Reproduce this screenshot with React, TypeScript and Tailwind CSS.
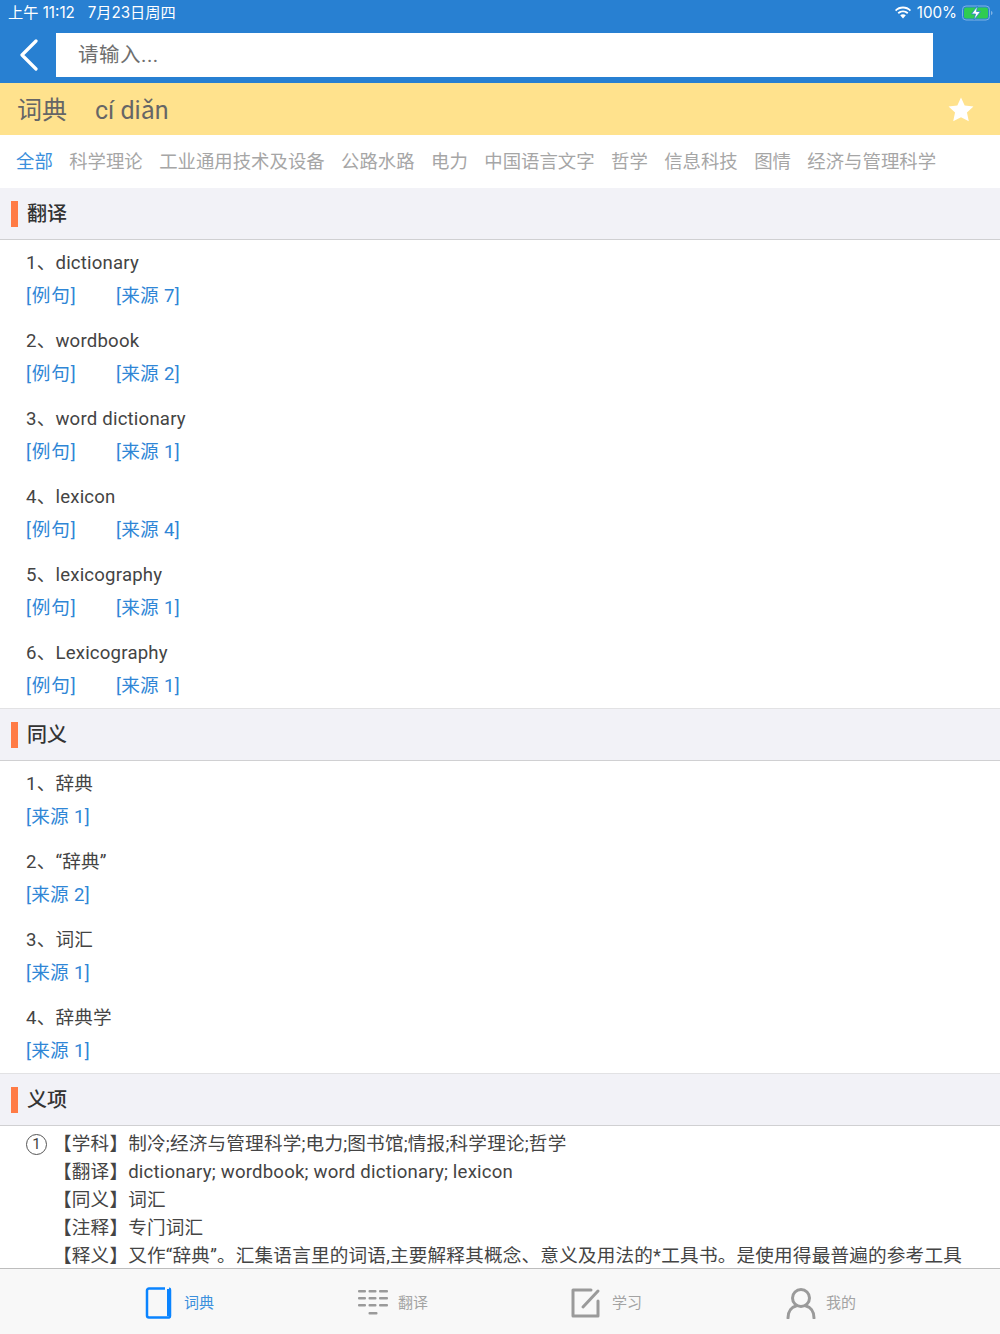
const font = { fontFamily: '"Roboto", "Noto Sans CJK SC", sans-serif' };

const subjects = ["科学理论", "工业通用技术及设备", "公路水路", "电力", "中国语言文字", "哲学", "信息科技", "图情", "经济与管理科学"];

const translations = [
  { text: "1、dictionary", source: 7 },
  { text: "2、wordbook", source: 2 },
  { text: "3、word dictionary", source: 1 },
  { text: "4、lexicon", source: 4 },
  { text: "5、lexicography", source: 1 },
  { text: "6、Lexicography", source: 1 },
];

const synonyms = [
  { text: "1、辞典", source: 1 },
  { text: "2、“辞典”", source: 2 },
  { text: "3、词汇", source: 1 },
  { text: "4、辞典学", source: 1 },
];

const meanings = [
  ["【学科】", "制冷;经济与管理科学;电力;图书馆;情报;科学理论;哲学"],
  ["【翻译】", "dictionary; wordbook; word dictionary; lexicon"],
  ["【同义】", "词汇"],
  ["【注释】", "专门词汇"],
  ["【释义】", "又作“辞典”。汇集语言里的词语,主要解释其概念、意义及用法的*工具书。是使用得最普遍的参考工具"],
];

function SectionHeader({ title, first }: { title: string; first?: boolean }) {
  return (
    <div
      className={
        first
          ? "flex h-[52px] items-center border-b border-b-[#d0d0d2] bg-[#f2f2f7] pl-[11px]"
          : "flex h-[53px] items-center border-y border-t-[#e2e2e4] border-b-[#d0d0d2] bg-[#f2f2f7] pl-[11px]"
      }
    >
      <div className="h-[26px] w-[7px] bg-[#ff7b45]" />
      <span className="ml-[9px] text-[20px] font-medium text-[#333]">{title}</span>
    </div>
  );
}

function Row({ text, source, example }: { text: string; source: number; example?: boolean }) {
  return (
    <div className="h-[78px] pl-[26px] pt-[7px] text-[18.6px] leading-[33px]">
      <div className="tracking-[0.2px] text-[#444]">{text}</div>
      <div className="flex text-[#2f86d6]">
        {example && <span className="w-[90px] tracking-[0.9px]">[例句]</span>}
        <span className="tracking-[0.3px]">[来源 {source}]</span>
      </div>
    </div>
  );
}

function TabItem({ icon, label, active }: { icon: React.ReactNode; label: string; active?: boolean }) {
  return (
    <div className="flex w-[214px] items-center">
      <div className="flex w-[51px] justify-center">{icon}</div>
      <span className={active ? "text-[15px] text-[#3b8fdc]" : "text-[15px] text-[#a3a3a3]"}>{label}</span>
    </div>
  );
}

export default function App() {
  return (
    <div className="flex h-[1334px] w-[1000px] flex-col overflow-hidden bg-white" style={font}>
      <div className="bg-[#2880d2]">
        <div className="flex h-[33px] items-center justify-between pl-[8px] pr-[6px] font-['Inter','Noto_Sans_CJK_SC',sans-serif] text-[15.2px] text-white">
          <span className="mt-[-7px]">上午 11:12&nbsp;&nbsp;&nbsp;7月23日周四</span>
          <div className="mt-[-7px] flex items-center gap-[5px]">
            <svg width="18" height="14" viewBox="0 0 18 14" fill="white">
              <path d="M9 2.500c2.600 0 5 1 6.800 2.700l1.200-1.300C14.900 1.800 12.100.6 9 .6S3.100 1.800 1 3.900l1.200 1.300C4 3.500 6.400 2.500 9 2.500z" />
              <path d="M9 6.300c1.600 0 3 .6 4.100 1.600l1.300-1.300C13 5.200 11.100 4.400 9 4.400s-4 .8-5.400 2.200l1.300 1.300C6 6.900 7.400 6.300 9 6.300z" />
              <path d="M9 8.200c-1.100 0-2 .4-2.800 1.100L9 12.400l2.800-3.100C11 8.600 10.100 8.200 9 8.200z" />
            </svg>
            <span>100%</span>
            <svg width="32" height="16" viewBox="0 0 32 16">
              <rect x="0.500" y="1" width="27" height="14" rx="3.500" fill="none" stroke="#7fb2e4" />
              <rect x="2" y="2.500" width="24" height="11" rx="2" fill="#2fcc52" />
              <path d="M29 6v4c1-.3 1.500-1 1.500-2s-.5-1.700-1.500-2z" fill="#7fb2e4" />
              <path d="M15.500 1 9.500 9h4l-1.500 6 6.500-8.500h-4z" fill="white" stroke="#2880d2" strokeWidth="0.800" />
            </svg>
          </div>
        </div>
        <div className="flex h-[50px] items-start">
          <div className="flex h-[44px] w-[56px] items-center justify-center pl-[1px]">
            <svg width="22" height="32" viewBox="0 0 22 32" fill="none" stroke="white" strokeWidth="3.200" strokeLinecap="round" strokeLinejoin="round">
              <path d="M18 2 4 16l14 14" />
            </svg>
          </div>
          <div className="flex h-[44px] w-[877px] items-center bg-white pl-[22px] text-[20.5px] tracking-[0.5px] text-[#6f6f6f]">请输入...</div>
        </div>
      </div>

      <div className="flex h-[52px] items-center justify-between bg-[#ffe28d] pl-[17px] pr-[26px] text-[#666]">
        <div className="flex items-center pt-[3px]">
          <span className="w-[78px] text-[25px]">词典</span>
          <span className="text-[25px]">cí diǎn</span>
        </div>
        <svg width="26" height="25" viewBox="0 0 24 23" fill="white">
          <path d="M12 .5l3.400 7.400 8.100.9-6 5.500 1.700 8L12 18.600l-7.200 3.700 1.700-8-6-5.500 8.100-.9z" />
        </svg>
      </div>

      <div className="flex h-[53px] items-center gap-[16.4px] bg-white pl-[16px] pt-[1px] text-[18.4px] text-[#a6a6a6]">
        <span className="text-[#3b8fdc]">全部</span>
        {subjects.map((s) => (
          <span key={s}>{s}</span>
        ))}
      </div>

      <div className="min-h-0 flex-1 overflow-hidden">
        <SectionHeader title="翻译" first />
        {translations.map((t) => (
          <Row key={t.text} text={t.text} source={t.source} example />
        ))}
        <SectionHeader title="同义" />
        {synonyms.map((t) => (
          <Row key={t.text} text={t.text} source={t.source} />
        ))}
        <SectionHeader title="义项" />
        <div className="flex pl-[26px] pt-[4px] text-[18.6px] leading-[28px] tracking-[0.2px] text-[#444]">
          <div className="flex h-[28px] w-[27px] items-center">
            <div className="flex h-[21px] w-[21px] items-center justify-center rounded-full border border-[#555] text-[15px] leading-none">1</div>
          </div>
          <div>
            {meanings.map(([k, v]) => (
              <div key={k} className="whitespace-nowrap">
                {k}
                {v}
              </div>
            ))}
          </div>
        </div>
      </div>

      <div className="flex h-[66px] items-center border-t border-[#bdbdbd] bg-[#f8f8f8] pl-[133px] pt-[3px]">
        <TabItem
          active
          label="词典"
          icon={
            <svg width="28" height="34" viewBox="0 0 28 34" fill="none" stroke="#0a84ff" strokeWidth="2.500" strokeLinejoin="round">
              <path d="M20 2.500H4a2 2 0 0 0-2 2v25a2 2 0 0 0 2 2h20a1.500 1.500 0 0 0 1-1.500v-26a1.500 1.500 0 0 0-1-1.500" />
              <path d="M23.500 3v27" strokeWidth="3" />
            </svg>
          }
        />
        <TabItem
          label="翻译"
          icon={
            <svg width="32" height="28" viewBox="0 0 32 28" fill="#9a9a9a">
              <rect x="1" y="1" width="8" height="2.500" rx="1" />
              <rect x="11.500" y="1" width="8" height="2.500" rx="1" />
              <rect x="22" y="1" width="9" height="2.500" rx="1" />
              <rect x="1" y="8" width="8" height="2.500" rx="1" />
              <rect x="11.500" y="8" width="8" height="2.500" rx="1" />
              <rect x="22" y="8" width="9" height="2.500" rx="1" />
              <rect x="1" y="15" width="8" height="2.500" rx="1" />
              <rect x="11.500" y="15" width="8" height="2.500" rx="1" />
              <rect x="22" y="15" width="9" height="2.500" rx="1" />
              <rect x="11.500" y="23" width="9" height="2.500" rx="1" />
            </svg>
          }
        />
        <TabItem
          label="学习"
          icon={
            <svg width="32" height="30" viewBox="0 0 32 30" fill="none" stroke="#9a9a9a" strokeWidth="3" strokeLinecap="round" strokeLinejoin="round">
              <path d="M20 2H2v26h25V13" />
              <path d="M12 19 27 3" />
            </svg>
          }
        />
        <TabItem
          label="我的"
          icon={
            <svg width="30" height="32" viewBox="0 0 30 32" fill="none" stroke="#9a9a9a" strokeWidth="3" strokeLinecap="round">
              <circle cx="15" cy="11" r="8.500" />
              <path d="M2 31c0-7 4-11 8-12M28 31c0-7-4-11-8-12" />
            </svg>
          }
        />
      </div>
    </div>
  );
}
